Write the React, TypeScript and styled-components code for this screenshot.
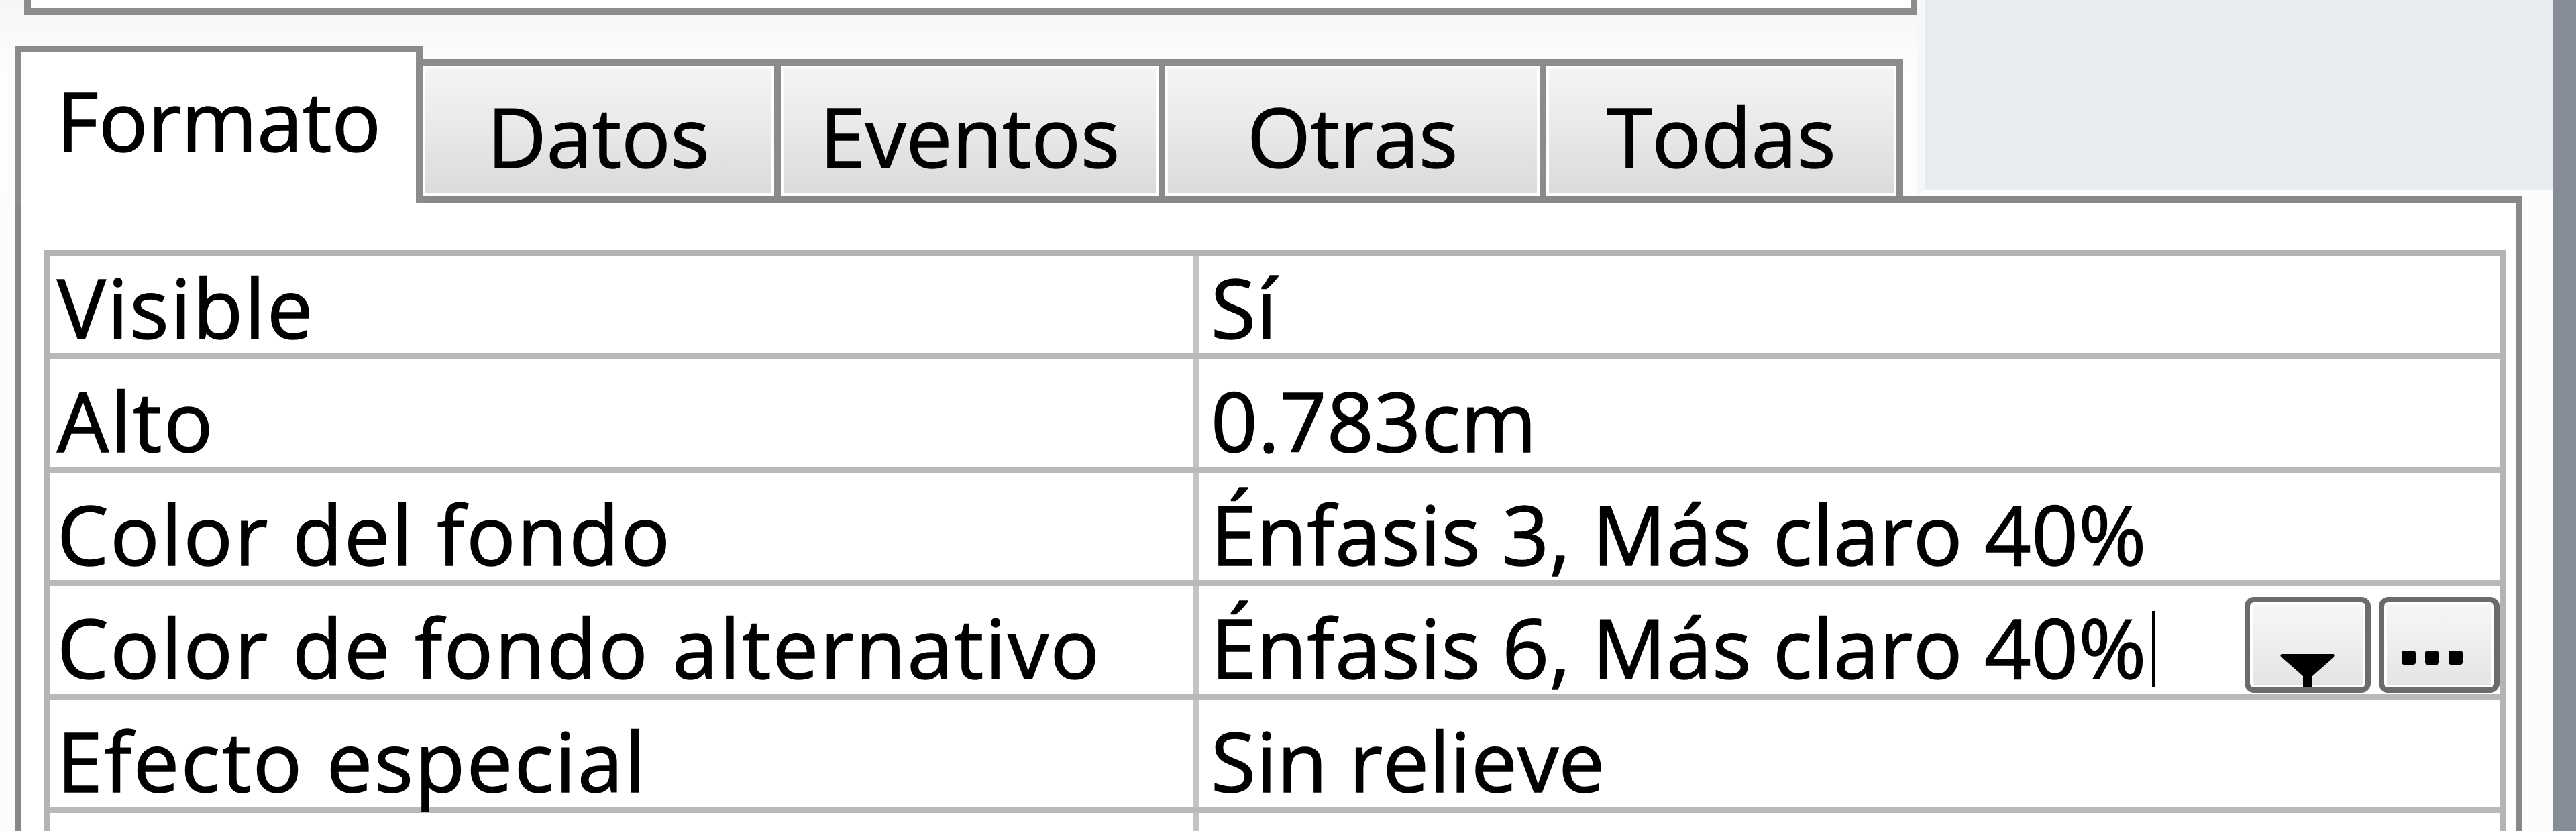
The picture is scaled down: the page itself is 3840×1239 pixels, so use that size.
import * as React from 'react';
import styled, { createGlobalStyle } from 'styled-components';

const GlobalStyle = createGlobalStyle`
    html, body {
        margin: 0;
        padding: 0;
        height: 100%;
        overflow: hidden;
    }
    body {
        background: #fcfcfd;
        font-family: 'Open Sans', 'Noto Sans', sans-serif;
        color: #000;
        -webkit-text-stroke: 1.5px #000;
    }
    #root {
        height: 100%;
    }
`;

const Window = styled.div`
    display: flex;
    height: 100vh;
`;

const Sheet = styled.div`
    flex: 1;
    min-width: 0;
    display: flex;
    flex-direction: column;
    background: #fcfcfd;
`;

const ScrollEdge = styled.div`
    width: 35px;
    flex-shrink: 0;
    background: #878d97;
`;

const Header = styled.div`
    display: grid;
    grid-template-columns: 2858px 1fr;
    height: 292px;
    flex-shrink: 0;
`;

const TabArea = styled.div`
    display: flex;
    flex-direction: column;
    background: linear-gradient(#f5f6f7, #fdfdfd 35%);
`;

const ComboStub = styled.div`
    height: 12px;
    margin-left: 36px;
    border: 10px solid #8c8c8c;
    border-top: none;
    background: #fff;
`;

const TabStrip = styled.div`
    flex: 1;
    display: flex;
    align-items: flex-end;
    padding-left: 22px;
`;

const Tab = styled.div<{ $active?: boolean; $width: number }>`
    box-sizing: border-box;
    position: relative;
    z-index: ${p => (p.$active ? 2 : 1)};
    width: ${p => p.$width}px;
    height: ${p => (p.$active ? 234 : 204)}px;
    margin-bottom: ${p => (p.$active ? -10 : 0)}px;
    padding-top: ${p => (p.$active ? 40 : 44)}px;
    border: 10px solid #8b8b8b;
    border-bottom: none;
    background: ${p => (p.$active ? '#fff' : 'linear-gradient(#f5f5f5, #e7e7e7 55%, #dadada)')};
    box-shadow: ${p => (p.$active ? 'none' : 'inset 0 0 0 4px #fff')};
    display: flex;
    justify-content: center;
    align-items: flex-start;
    font-size: 122px;
    line-height: 1;
    white-space: nowrap;
    & + & {
        margin-left: -10px;
    }
`;

const HeaderFill = styled.div`
    background: #e8ebf0;
    border-bottom: 9px solid #fdfdfe;
    border-left: 12px solid #f6f7f9;
`;

const Panel = styled.div`
    flex: 1;
    min-height: 0;
    margin: 0 45px 0 22px;
    padding: 70px 15px 0 34px;
    border: 10px solid #888;
    border-bottom: none;
    background: #fff;
    overflow: hidden;
`;

const PropertyGrid = styled.div`
    border: 9px solid #b4b4b4;
    border-bottom: none;
`;

const Row = styled.div`
    box-sizing: border-box;
    display: grid;
    grid-template-columns: 1703px 1fr;
    height: 169px;
    border-bottom: 9px solid #b9b9b9;
    &:first-child {
        height: 155px;
    }
`;

const Cell = styled.div<{ $value?: boolean }>`
    display: flex;
    align-items: flex-end;
    min-width: 0;
    padding: 0 0 8px ${p => (p.$value ? 17 : 10)}px;
    border-left: ${p => (p.$value ? '10px solid #c4c4c4' : 'none')};
    font-size: 122px;
    line-height: 1;
    letter-spacing: ${p => (p.$value ? 0.5 : 2.5)}px;
    white-space: nowrap;
`;

const Caret = styled.span`
    width: 4px;
    height: 113px;
    margin: 0 0 2px 8px;
    background: #000;
`;

const ButtonGroup = styled.div`
    display: flex;
    gap: 12px;
    margin: 0 0 -7px auto;
`;

const PickerButton = styled.button<{ $width: number; $padBottom: number; $padRight?: number }>`
    box-sizing: border-box;
    width: ${p => p.$width}px;
    height: 143px;
    padding: 0 ${p => p.$padRight || 0}px ${p => p.$padBottom}px 0;
    border: 8px solid #6b6b6b;
    border-radius: 14px;
    background: linear-gradient(#f7f7f7, #e4e4e4);
    box-shadow: inset 0 0 0 4px #fff;
    display: flex;
    justify-content: center;
    align-items: flex-end;
    gap: 14px;
`;

const Dot = styled.span`
    width: 21px;
    height: 21px;
    border-radius: 4px;
    background: #000;
`;

const tabs = [
    { label: 'Formato', width: 608, active: true },
    { label: 'Datos', width: 544 },
    { label: 'Eventos', width: 583 },
    { label: 'Otras', width: 578 },
    { label: 'Todas', width: 542 },
];

const rows = [
    { name: 'Visible', value: 'Sí' },
    { name: 'Alto', value: '0.783cm' },
    { name: 'Color del fondo', value: 'Énfasis 3, Más claro 40%' },
    { name: 'Color de fondo alternativo', value: 'Énfasis 6, Más claro 40%', editing: true },
    { name: 'Efecto especial', value: 'Sin relieve' },
    { name: '', value: '' },
];

const DropArrow = () => (
    <svg width="84" height="50" viewBox="0 0 84 50">
        <path d="M4 0 H80 Q84 0 82 4 L49 33 V50 H35 V33 L2 4 Q0 0 4 0 Z" fill="#000" />
    </svg>
);

const App = () => {
    return (
        <Window>
            <GlobalStyle />
            <Sheet>
                <Header>
                    <TabArea>
                        <ComboStub />
                        <TabStrip>
                            {tabs.map(t => (
                                <Tab key={t.label} $active={t.active} $width={t.width}>
                                    {t.label}
                                </Tab>
                            ))}
                        </TabStrip>
                    </TabArea>
                    <HeaderFill />
                </Header>
                <Panel>
                    <PropertyGrid>
                        {rows.map((r, i) => (
                            <Row key={i}>
                                <Cell>{r.name}</Cell>
                                <Cell $value>
                                    {r.value}
                                    {r.editing && (
                                        <>
                                            <Caret />
                                            <ButtonGroup>
                                                <PickerButton $width={188} $padBottom={0}>
                                                    <DropArrow />
                                                </PickerButton>
                                                <PickerButton $width={180} $padBottom={34} $padRight={22}>
                                                    <Dot />
                                                    <Dot />
                                                    <Dot />
                                                </PickerButton>
                                            </ButtonGroup>
                                        </>
                                    )}
                                </Cell>
                            </Row>
                        ))}
                    </PropertyGrid>
                </Panel>
            </Sheet>
            <ScrollEdge />
        </Window>
    );
};

export default App;
